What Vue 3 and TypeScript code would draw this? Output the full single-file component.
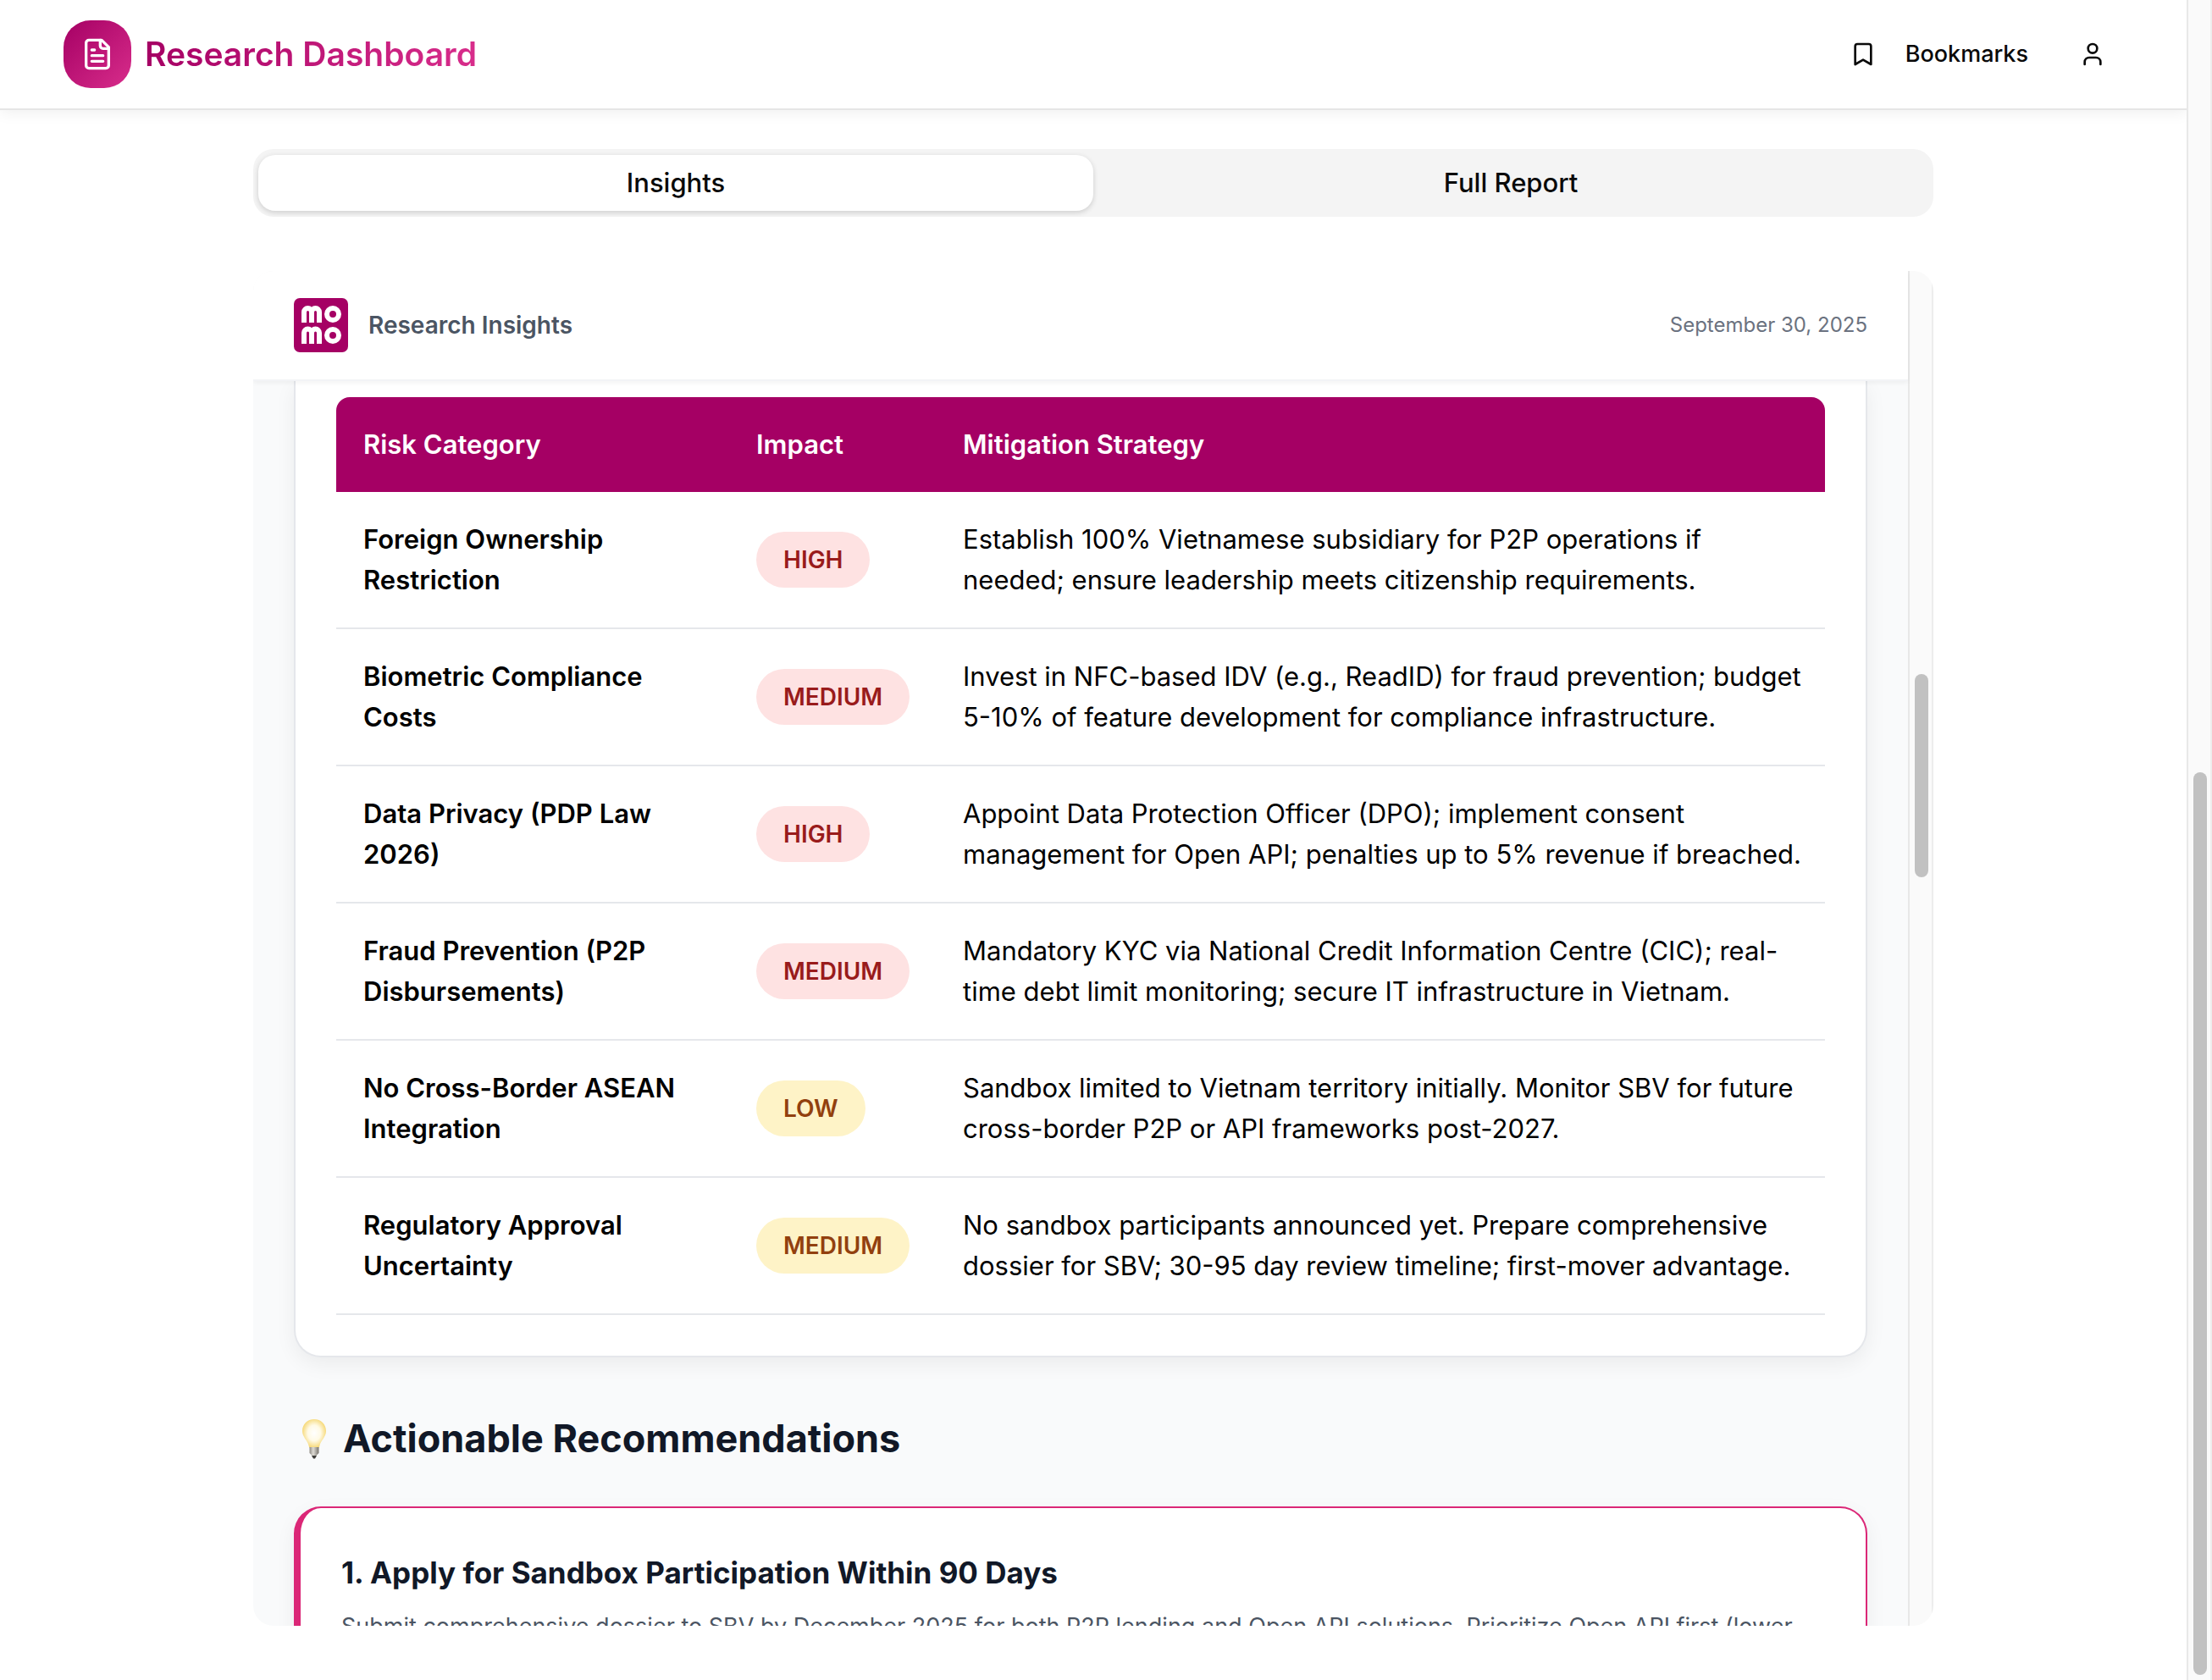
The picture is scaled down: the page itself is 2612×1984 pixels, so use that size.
<script setup lang="ts">
import { ref } from 'vue'

type Tone = 'red' | 'amber'
interface Risk {
  category: string
  impact: string
  tone: Tone
  strategy: string
}

const tabs = ['Insights', 'Full Report']
const activeTab = ref('Insights')

const risks: Risk[] = [
  { category: 'Foreign Ownership Restriction', impact: 'HIGH', tone: 'red', strategy: 'Establish 100% Vietnamese subsidiary for P2P operations if needed; ensure leadership meets citizenship requirements.' },
  { category: 'Biometric Compliance Costs', impact: 'MEDIUM', tone: 'red', strategy: 'Invest in NFC-based IDV (e.g., ReadID) for fraud prevention; budget 5-10% of feature development for compliance infrastructure.' },
  { category: 'Data Privacy (PDP Law 2026)', impact: 'HIGH', tone: 'red', strategy: 'Appoint Data Protection Officer (DPO); implement consent management for Open API; penalties up to 5% revenue if breached.' },
  { category: 'Fraud Prevention (P2P Disbursements)', impact: 'MEDIUM', tone: 'red', strategy: 'Mandatory KYC via National Credit Information Centre (CIC); real-time debt limit monitoring; secure IT infrastructure in Vietnam.' },
  { category: 'No Cross-Border ASEAN Integration', impact: 'LOW', tone: 'amber', strategy: 'Sandbox limited to Vietnam territory initially. Monitor SBV for future cross-border P2P or API frameworks post-2027.' },
  { category: 'Regulatory Approval Uncertainty', impact: 'MEDIUM', tone: 'amber', strategy: 'No sandbox participants announced yet. Prepare comprehensive dossier for SBV; 30-95 day review timeline; first-mover advantage.' },
]
</script>

<template>
  <div class="shell">
    <div class="page">
      <header class="topbar">
        <div class="brand">
          <span class="brand-mark">
            <svg width="40" height="40" viewBox="0 0 24 24" fill="none" stroke="currentColor" stroke-width="2" stroke-linecap="round" stroke-linejoin="round" aria-hidden="true">
              <path d="M15 2H6a2 2 0 0 0-2 2v16a2 2 0 0 0 2 2h12a2 2 0 0 0 2-2V7Z" />
              <path d="M14 2v4a2 2 0 0 0 2 2h4" />
              <path d="M10 9H8M16 13H8M16 17H8" />
            </svg>
          </span>
          <h1 class="brand-name">Research Dashboard</h1>
        </div>
        <nav class="actions">
          <button type="button" class="action">
            <svg width="32" height="32" viewBox="0 0 24 24" fill="none" stroke="currentColor" stroke-width="2" stroke-linecap="round" stroke-linejoin="round" aria-hidden="true">
              <path d="m19 21-7-4-7 4V5a2 2 0 0 1 2-2h10a2 2 0 0 1 2 2v16z" />
            </svg>
            <span>Bookmarks</span>
          </button>
          <button type="button" class="action" aria-label="Account">
            <svg width="32" height="32" viewBox="0 0 24 24" fill="none" stroke="currentColor" stroke-width="2" stroke-linecap="round" stroke-linejoin="round" aria-hidden="true">
              <path d="M19 21v-2a4 4 0 0 0-4-4H9a4 4 0 0 0-4 4v2" />
              <circle cx="12" cy="7" r="4" />
            </svg>
          </button>
        </nav>
      </header>

      <main class="content">
        <div class="tabs" role="tablist">
          <button
            v-for="tab in tabs"
            :key="tab"
            type="button"
            role="tab"
            class="tab"
            :class="{ active: tab === activeTab }"
            :aria-selected="tab === activeTab"
            @click="activeTab = tab"
          >{{ tab }}</button>
        </div>

        <section class="panel">
          <div class="report">
            <header class="report-head">
              <svg class="logo" width="64" height="64" viewBox="0 0 64 64" role="img" aria-label="MoMo">
                <rect width="64" height="64" rx="7" fill="#a50064" />
                <g fill="none" stroke="#fff" stroke-width="6">
                  <path d="M12 29V16.500a4.500 4.500 0 0 1 9 0V29M21 29V16.500a4.500 4.500 0 0 1 9 0V29" />
                  <circle cx="46" cy="19" r="7" />
                  <path d="M12 54V41a4.500 4.500 0 0 1 9 0V54M21 54V41a4.500 4.500 0 0 1 9 0V54" />
                  <circle cx="46" cy="44" r="7" />
                </g>
              </svg>
              <h2 class="report-title">Research Insights</h2>
              <time class="report-date" datetime="2025-09-30">September 30, 2025</time>
            </header>

            <div class="report-body">
              <div class="card risk-card">
                <table class="risks">
                  <colgroup>
                    <col class="col-category" />
                    <col class="col-impact" />
                    <col />
                  </colgroup>
                  <thead>
                    <tr>
                      <th scope="col">Risk Category</th>
                      <th scope="col">Impact</th>
                      <th scope="col">Mitigation Strategy</th>
                    </tr>
                  </thead>
                  <tbody>
                    <tr v-for="risk in risks" :key="risk.category">
                      <th scope="row">{{ risk.category }}</th>
                      <td class="impact"><span class="pill" :class="risk.tone">{{ risk.impact }}</span></td>
                      <td class="strategy">{{ risk.strategy }}</td>
                    </tr>
                  </tbody>
                </table>
              </div>

              <h2 class="section-title">
                <svg class="bulb" width="48" height="48" viewBox="0 0 48 48" role="img" aria-label="Light bulb">
                  <defs>
                    <radialGradient id="glass" cx="50%" cy="48%" r="54%">
                      <stop offset="0" stop-color="#ffffff" />
                      <stop offset="0.5" stop-color="#fffae6" />
                      <stop offset="1" stop-color="#f5d56c" />
                    </radialGradient>
                    <linearGradient id="metal">
                      <stop offset="0" stop-color="#8f8b84" />
                      <stop offset="0.4" stop-color="#dedbd5" />
                      <stop offset="1" stop-color="#77736c" />
                    </linearGradient>
                  </defs>
                  <path d="M24 1C16 1 10 7 10 15c0 7 6 11 7.500 17 0.300 2 1 3 2 3h9c1 0 1.700-1 2-3C32 26 38 22 38 15 38 7 32 1 24 1Z" fill="url(#glass)" />
                  <path d="M18.500 34h11v7l-2 2-2 2h-3l-2-2-2-2Z" fill="url(#metal)" />
                  <path d="M21 44h6l-2 3.500h-2Z" fill="#3f3d3a" />
                </svg>
                Actionable Recommendations
              </h2>

              <article class="card rec-card">
                <h3 class="rec-title">1. Apply for Sandbox Participation Within 90 Days</h3>
                <p class="rec-text">Submit comprehensive dossier to SBV by December 2025 for both P2P lending and Open API solutions. Prioritize Open API first (lower</p>
              </article>
            </div>
          </div>
          <div class="rail" aria-hidden="true"><span class="thumb panel-thumb"></span></div>
        </section>
      </main>
    </div>
    <div class="rail" aria-hidden="true"><span class="thumb page-thumb"></span></div>
  </div>
</template>

<style>
body {
  margin: 0;
  background: #fff;
}
</style>

<style scoped>
* {
  box-sizing: border-box;
}
h1, h2, h3, p {
  margin: 0;
}
button {
  border: 0;
  padding: 0;
  background: none;
  font: inherit;
  color: inherit;
}
.shell {
  display: flex;
  height: 100vh;
  overflow: hidden;
  font-family: Inter, "Liberation Sans", sans-serif;
  font-size: 31px;
  line-height: 48px;
  color: #0a0a0a;
}
.page {
  flex: 1;
  min-width: 0;
  display: flex;
  flex-direction: column;
}
.topbar {
  display: flex;
  align-items: center;
  justify-content: space-between;
  height: 130px;
  flex: none;
  padding: 0 95px 0 75px;
  border-bottom: 2px solid #e5e5e5;
  box-shadow: 0 4px 16px rgba(0, 0, 0, 0.06);
}
.brand {
  display: flex;
  align-items: center;
  gap: 16px;
}
.brand-mark {
  display: flex;
  align-items: center;
  justify-content: center;
  width: 80px;
  height: 80px;
  border-radius: 32px;
  background: linear-gradient(135deg, #a50064, #d82d8b);
  color: #fff;
}
.brand-name {
  font-size: 39px;
  font-weight: 600;
  background: linear-gradient(90deg, #a50064, #d82d8b);
  background-clip: text;
  -webkit-background-clip: text;
  color: transparent;
}
.actions {
  display: flex;
  gap: 60px;
}
.action {
  display: flex;
  align-items: center;
  gap: 34px;
  font-size: 27px;
  font-weight: 500;
}
.content {
  flex: 1;
  min-height: 0;
  width: 100%;
  max-width: 1984px;
  margin: 0 auto;
  padding: 46px 0 64px;
  display: flex;
  flex-direction: column;
  gap: 64px;
}
.tabs {
  display: flex;
  height: 80px;
  flex: none;
  padding: 7px 6px;
  border-radius: 24px;
  background: #f4f4f4;
}
.tab {
  flex: 1;
  border-radius: 20px;
  font-weight: 500;
}
.tab.active {
  background: #fff;
  box-shadow: 0 2px 6px rgba(0, 0, 0, 0.16);
}
.panel {
  flex: 1;
  min-height: 0;
  display: flex;
  border-radius: 24px;
  overflow: hidden;
}
.report {
  flex: 1;
  min-width: 0;
  display: flex;
  flex-direction: column;
  background: #f9fafb;
}
.report-head {
  position: relative;
  z-index: 1;
  flex: none;
  display: flex;
  align-items: center;
  height: 130px;
  padding: 0 48px;
  background: #fff;
  border-bottom: 2px solid #f3f4f6;
  box-shadow: 0 2px 6px rgba(0, 0, 0, 0.05);
}
.report-title {
  margin-left: 24px;
  font-size: 28px;
  font-weight: 600;
  color: #4b5563;
}
.report-date {
  margin-left: auto;
  font-size: 24px;
  color: #6b7280;
}
.report-body {
  flex: 1;
  min-height: 0;
  overflow: hidden;
  padding: 0 48px;
}
.card {
  background: #fff;
  border: 2px solid #e5e7eb;
  border-radius: 32px;
  box-shadow: 0 8px 24px rgba(0, 0, 0, 0.06);
}
.risk-card {
  padding: 19px 48px 48px;
  border-top: 0;
  border-radius: 0 0 32px 32px;
}
.risks {
  width: 100%;
  table-layout: fixed;
  border-collapse: separate;
  border-spacing: 0;
  color: #000;
}
.col-category {
  width: 464px;
}
.col-impact {
  width: 244px;
}
.risks th,
.risks td {
  padding: 32px;
  text-align: left;
  vertical-align: middle;
}
.risks th {
  font-weight: 600;
}
.risks thead th {
  background: #a50064;
  color: #fff;
}
.risks thead th:first-child {
  border-top-left-radius: 16px;
}
.risks thead th:last-child {
  border-top-right-radius: 16px;
}
.risks tbody th,
.risks tbody td {
  border-bottom: 2px solid #e5e7eb;
}
.risks .impact {
  padding-top: 0;
  padding-bottom: 0;
}
.risks .strategy {
  padding-right: 24px;
}
.pill {
  display: inline-block;
  padding: 12px 32px;
  border-radius: 33px;
  font-size: 28px;
  line-height: 42px;
  font-weight: 600;
  vertical-align: middle;
}
.pill.red {
  background: #fee2e2;
  color: #991b1b;
}
.pill.amber {
  background: #fef3c7;
  color: #92400e;
}
.section-title {
  display: flex;
  align-items: center;
  gap: 10px;
  margin: 64px 0 48px;
  font-size: 45px;
  line-height: 64px;
  font-weight: 700;
  color: #111827;
}
.rec-card {
  padding: 48px;
  border-color: #db2777;
  border-left-width: 8px;
}
.rec-title {
  font-size: 35px;
  line-height: 56px;
  font-weight: 700;
  color: #111827;
}
.rec-text {
  margin-top: 12px;
  font-size: 27px;
  color: #4b5563;
}
.rail {
  flex: none;
  width: 30px;
  padding-left: 2px;
  display: flex;
  flex-direction: column;
  align-items: center;
  background: #fafafa;
  border-left: 2px solid #e8e8e8;
  border-right: 2px solid #ededed;
}
.thumb {
  width: 16px;
  border-radius: 8px;
  background: #c1c1c1;
}
.panel-thumb {
  height: 15%;
  margin-top: 476px;
}
.page-thumb {
  flex: 1;
  margin: 912px 0 6px;
}
</style>
